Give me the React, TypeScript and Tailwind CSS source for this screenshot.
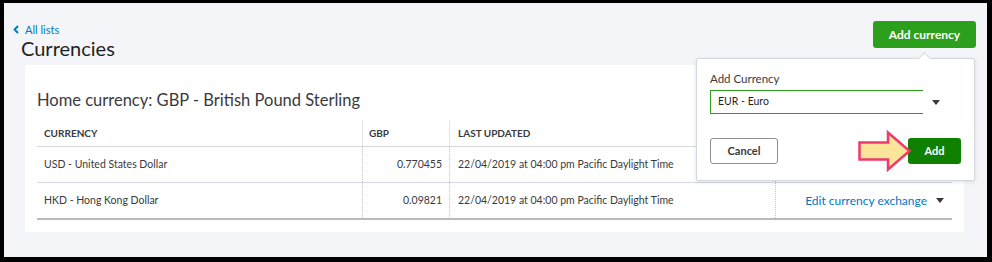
import type { ReactNode } from "react";

const font = { fontFamily: '"Lato", "Noto Sans", sans-serif' };

function Caret({ className = "" }: { className?: string }) {
  return (
    <svg width="8" height="5" viewBox="0 0 8 5" className={className}>
      <path d="M0 0h8L4 5z" fill="currentColor" />
    </svg>
  );
}

function HeadCell({ children, className = "" }: { children?: ReactNode; className?: string }) {
  return (
    <div className={`flex h-[27px] items-center border-b border-[#d4d7dc] text-[10px] font-bold uppercase text-[#393a3d] ${className}`}>
      {children}
    </div>
  );
}

function Cell({ children, className = "" }: { children?: ReactNode; className?: string }) {
  return <div className={`flex h-[35px] items-center text-[10.5px] text-[#393a3d] ${className}`}>{children}</div>;
}

const rows = [
  { name: "USD - United States Dollar", rate: "0.770455", updated: "22/04/2019 at 04:00 pm Pacific Daylight Time" },
  { name: "HKD - Hong Kong Dollar", rate: "0.09821", updated: "22/04/2019 at 04:00 pm Pacific Daylight Time" },
];

export default function App() {
  return (
    <div className="h-[262px] w-[992px] bg-black pb-[5px] pl-[4px] pr-[5px] pt-[3px]" style={font}>
      <div className="relative h-full overflow-hidden bg-[#f4f5f8]">
        <div className="flex items-start justify-between pr-[11px]">
          <div className="pl-[9px] pt-[20px]">
            <a className="flex items-center gap-[6px] text-[11px] leading-[13px] text-[#0077c5]" href="#">
              <svg width="6" height="9" viewBox="0 0 6 9">
                <path d="M5 1 1.5 4.5 5 8" fill="none" stroke="#0077c5" strokeWidth="1.8" />
              </svg>
              All lists
            </a>
            <h1 className="pl-[8px] text-[20px] leading-[24px] text-[#1f1f1f]">Currencies</h1>
          </div>
          <button className="mt-[18px] h-[27px] w-[103px] rounded-[3px] bg-[#2ca01c] text-[12px] font-bold text-white">
            Add currency
          </button>
        </div>

        <div className="ml-[21px] mr-[23px] mt-[5px] h-[167px] bg-white px-[12px] pt-[25px]">
          <h2 className="text-[16.5px] leading-[20px] text-[#393a3d]">Home currency: GBP - British Pound Sterling</h2>
          <div className="mt-[10px] grid grid-cols-[325px_87px_326px_177px] border-b-2 border-[#bababa]">
            <HeadCell className="pl-[7px]">Currency</HeadCell>
            <HeadCell className="border-l border-l-[#e3e5e8] pl-[6px]">GBP</HeadCell>
            <HeadCell className="border-l border-l-[#e3e5e8] pl-[8px]">Last updated</HeadCell>
            <HeadCell className="border-l border-l-[#e3e5e8]" />
            {rows.map((r, i) => (
              <div key={r.name} className={`col-span-4 grid grid-cols-[325px_87px_326px_177px] ${i === 0 ? "border-b border-[#d4d7dc]" : ""}`}>
                <Cell className="pl-[7px]">{r.name}</Cell>
                <Cell className="justify-end border-l border-dotted border-l-[#c4c4c4] pr-[7px]">{r.rate}</Cell>
                <Cell className="border-l border-dotted border-l-[#c4c4c4] pl-[8px]">{r.updated}</Cell>
                <Cell className="justify-end gap-[9px] border-l border-dotted border-l-[#c4c4c4] pr-[8px]">
                  {i === 1 && (
                    <>
                      <span className="text-[12px] text-[#0077c5]">Edit currency exchange</span>
                      <Caret className="text-[#393a3d]" />
                    </>
                  )}
                </Cell>
              </div>
            ))}
          </div>
        </div>

        {/* popover */}
        <div className="absolute left-[692px] top-[55px] h-[123px] w-[279px] rounded-[2px] border border-[#d4d7dc] bg-white px-[13px] pt-[12px] shadow-[0_1px_4px_rgba(0,0,0,0.12)]">
          <div className="absolute -top-[5px] left-[223px] h-[9px] w-[9px] rotate-45 border-l border-t border-[#d4d7dc] bg-white" />
          <div className="text-[11.5px] leading-[16px] text-[#393a3d]">Add Currency</div>
          <div className="mt-[3px] flex items-center">
            <div className="flex h-[24px] w-[213px] items-center border-y border-l border-[#2ca01c] pl-[7px] text-[10.5px] text-[#1f1f1f]">
              EUR - Euro
            </div>
            <Caret className="ml-[9px] text-[#393a3d]" />
          </div>
          <div className="mt-[24px] flex items-center justify-between">
            <button className="h-[26px] w-[68px] rounded-[3px] border border-[#8d9096] text-[11px] font-bold text-[#393a3d]">
              Cancel
            </button>
            <button className="h-[26px] w-[53px] rounded-[3px] bg-[#108000] text-[11px] font-bold text-white">Add</button>
          </div>
        </div>

        {/* pointer arrow */}
        <svg className="absolute left-[854px] top-[127px]" width="54" height="42" viewBox="0 0 54 42">
          <path
            d="M1.5 12.5H30V2.5L51.5 21 30 39.5V29.5H1.5Z"
            fill="#fde49b"
            stroke="#f0386b"
            strokeWidth="2.5"
            strokeLinejoin="miter"
          />
        </svg>
      </div>
    </div>
  );
}
